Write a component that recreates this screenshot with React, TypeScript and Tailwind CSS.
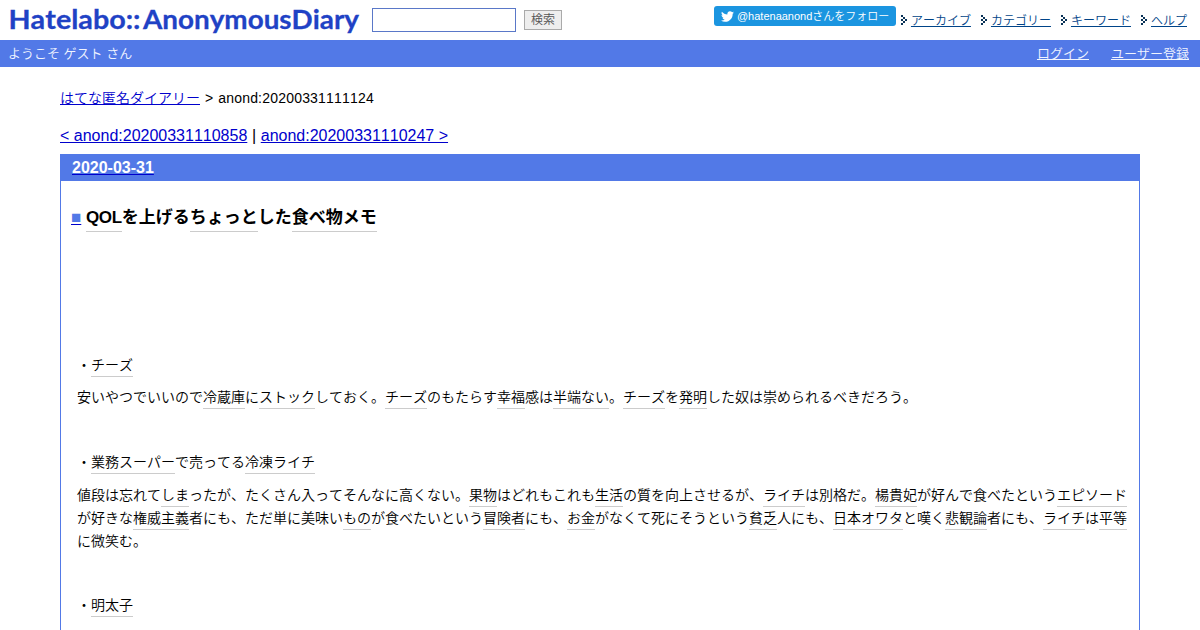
import type { ReactNode } from "react";
import { FaTwitter } from "react-icons/fa";

const menu = ["アーカイブ", "カテゴリー", "キーワード", "ヘルプ"];

function Keyword({ children }: { children: ReactNode }) {
	return (
		<a className="border-b border-[#cccccc] pb-[3px] text-black">{children}</a>
	);
}

function TitleKeyword({ children }: { children: ReactNode }) {
	return (
		<a className="border-b border-[#cccccc] pb-[4px] text-black">{children}</a>
	);
}

function MenuArrow() {
	return (
		<svg
			width="6"
			height="10"
			viewBox="0 0 6 10"
			shapeRendering="crispEdges"
			fill="#0b3357"
			className="mt-[-2px] mr-1 shrink-0"
		>
			<path d="M0 0h2v2h-2zM2 2h2v2h-2zM4 4h2v2h-2zM2 6h2v2h-2zM0 8h2v2h-2zM0 4h2v2h-2z" />
		</svg>
	);
}

function Logo() {
	return (
		<svg
			width="372"
			height="40"
			className="shrink-0"
			fill="#1f42c5"
			stroke="#1f42c5"
			strokeWidth="0.3"
			fontFamily="Lato, sans-serif"
			fontWeight="700"
			fontSize="27"
		>
			<text x="8.5" y="29" textLength="132" lengthAdjust="spacingAndGlyphs">
				Hatelabo::
			</text>
			<text x="143" y="29" textLength="216" lengthAdjust="spacingAndGlyphs">
				AnonymousDiary
			</text>
		</svg>
	);
}

function Header() {
	return (
		<header>
			<div className="flex h-10 items-start">
				<Logo />
				<input className="mt-2 h-6 w-36 border border-[#5a78c8] bg-white" />
				<button className="mt-[10px] ml-2 h-5 w-[38px] border border-[#aaaaaa] bg-[#eeeeee] text-[12px] leading-[17px] text-[#555555]">
					検索
				</button>
				<a className="mt-[6px] ml-auto flex h-5 w-[182px] items-center rounded-[3px] bg-[#1b95e0] pl-[7px] text-[11px] whitespace-nowrap text-white">
					<FaTwitter size={13} className="mr-[3px] shrink-0" />
					@hatenaanondさんをフォロー
				</a>
				<ul className="mt-[12px] mr-[13px] ml-[5px] flex gap-[10px] text-[12px] leading-[18px]">
					{menu.map((item) => (
						<li key={item} className="flex items-center">
							<MenuArrow />
							<a className="text-[#004488] underline underline-offset-1">
								{item}
							</a>
						</li>
					))}
				</ul>
			</div>
			<div className="flex h-[27px] items-center bg-[#5279e7] pr-[11px] pl-2 text-[13px] text-[#f0f4ff]">
				<span>ようこそ ゲスト さん</span>
				<a className="ml-auto underline">ログイン</a>
				<a className="ml-[22px] underline">ユーザー登録</a>
			</div>
		</header>
	);
}

function Entry() {
	return (
		<div className="h-[500px] border-x border-[#5279e7] pr-[10px]">
			<h3 className="pt-[25px] pl-[10px] text-[17px] leading-[24px] font-bold">
				<a className="text-[#0000cc] underline">
					<span className="text-[#5279e7]">■</span>
				</a>{" "}
				<span className="tracking-[-0.4px]">
					<TitleKeyword>QOL</TitleKeyword>
				</span>
				を上げる<TitleKeyword>ちょっと</TitleKeyword>した
				<TitleKeyword>食べ物</TitleKeyword>
				<TitleKeyword>メモ</TitleKeyword>
			</h3>
			<div className="mt-[124px] flex flex-col gap-[9.42px] pl-4 text-[14px] leading-[23px]">
				<p>
					・<Keyword>チーズ</Keyword>
				</p>
				<p>
					安いやつでいいので<Keyword>冷蔵庫</Keyword>に
					<Keyword>ストック</Keyword>しておく。<Keyword>チーズ</Keyword>
					のもたらす<Keyword>幸福</Keyword>感は<Keyword>半端ない</Keyword>。
					<Keyword>チーズ</Keyword>を<Keyword>発明</Keyword>
					した奴は崇められるべきだろう。
				</p>
				<p className="h-[23px]" />
				<p>
					・<Keyword>業務スーパー</Keyword>で売ってる
					<Keyword>冷凍</Keyword>
					<Keyword>ライチ</Keyword>
				</p>
				<p>
					値段は忘れて<Keyword>しま</Keyword>
					ったが、たくさん入ってそんなに高くない。<Keyword>果物</Keyword>
					はどれもこれも<Keyword>生活</Keyword>の質を向上させるが、
					<Keyword>ライチ</Keyword>は別格だ。<Keyword>楊貴妃</Keyword>
					が好んで食べたという<Keyword>エピソード</Keyword>が好きな
					<Keyword>権威主義</Keyword>者にも、ただ単に美味い
					<Keyword>もの</Keyword>が食べたいという<Keyword>冒険者</Keyword>
					にも、<Keyword>お金</Keyword>がなくて死にそうという
					<Keyword>貧乏</Keyword>人にも、<Keyword>日本</Keyword>
					<Keyword>オワタ</Keyword>と嘆く<Keyword>悲観論</Keyword>者にも、
					<Keyword>ライチ</Keyword>は<Keyword>平等</Keyword>に微笑む。
				</p>
				<p className="h-[23px]" />
				<p>
					・<Keyword>明太子</Keyword>
				</p>
			</div>
		</div>
	);
}

export default function App() {
	return (
		<div
			lang="ja"
			className="h-[630px] w-[1200px] overflow-hidden bg-white font-['Liberation_Sans','Noto_Sans_CJK_JP',sans-serif] font-[350] text-black [font-kerning:none]"
		>
			<Header />
			<main className="mx-[60px]">
				<div className="mt-[21px] flex text-[14px] leading-[20px]">
					<a className="text-[#0000cc] underline">はてな匿名ダイアリー</a>
					<span className="ml-[5px]">&gt;</span>
					<span className="ml-[5px] tracking-[0.2px]">
						anond:20200331111124
					</span>
				</div>
				<div className="mt-[17px] text-[16px] leading-[22px]">
					<a className="text-[#0000cc] underline">&lt; anond:20200331110858</a>
					<span className="px-[0.2px]"> | </span>
					<a className="text-[#0000cc] underline">anond:20200331110247 &gt;</a>
				</div>
				<h2 className="mt-[7px] h-[27px] bg-[#5279e7] pl-3 text-[16px] leading-[27px] font-bold">
					<a className="text-[#0000cc] underline">
						<span className="text-white">2020-03-31</span>
					</a>
				</h2>
				<Entry />
			</main>
		</div>
	);
}
